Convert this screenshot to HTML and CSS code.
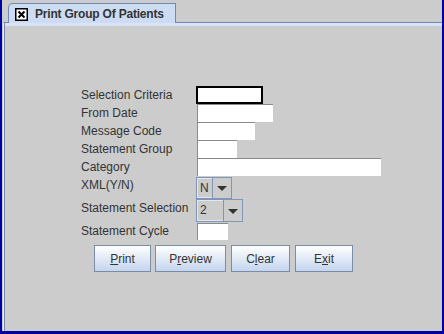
FILE: index.html
```html
<!DOCTYPE html>
<html lang="en">
<head>
    <meta charset="UTF-8">
    <title>Print Group Of Patients</title>
    <link rel="stylesheet" href="styles.css">
</head>
<body>
    <div class="window">
        <div class="tab-row">
            <div class="tab">
                <svg class="tab-close" width="13" height="13" viewBox="0 0 13 13">
                    <rect x="0.75" y="0.75" width="11.5" height="11.5" fill="#ffffff" stroke="#000" stroke-width="1.5"/>
                    <path d="M3.5 3.5 L9.5 9.5 M9.5 3.5 L3.5 9.5" stroke="#000" stroke-width="2"/>
                </svg>
                <span class="tab-title">Print Group Of Patients</span>
            </div>
        </div>
        <div class="tab-body">
            <div class="tab-stripe"></div>
            <div class="panel">
                <div class="row">
                    <label class="field-label">Selection Criteria</label>
                    <div class="text-field focused w-selection"></div>
                </div>
                <div class="row">
                    <label class="field-label">From Date</label>
                    <div class="text-field w-date"></div>
                </div>
                <div class="row">
                    <label class="field-label">Message Code</label>
                    <div class="text-field w-message"></div>
                </div>
                <div class="row">
                    <label class="field-label">Statement Group</label>
                    <div class="text-field w-group"></div>
                </div>
                <div class="row">
                    <label class="field-label">Category</label>
                    <div class="text-field w-category"></div>
                </div>
                <div class="row row-combo">
                    <label class="field-label">XML(Y/N)</label>
                    <div class="combo combo-xml">
                        <span class="combo-value">N</span>
                        <span class="combo-arrow"></span>
                    </div>
                </div>
                <div class="row row-combo row-combo-tall">
                    <label class="field-label">Statement Selection</label>
                    <div class="combo combo-selection">
                        <span class="combo-value">2</span>
                        <span class="combo-arrow"></span>
                    </div>
                </div>
                <div class="row">
                    <label class="field-label">Statement Cycle</label>
                    <div class="text-field w-cycle"></div>
                </div>
                <div class="buttons">
                    <button class="btn btn-print"><u>P</u>rint</button>
                    <button class="btn btn-preview">P<u>r</u>eview</button>
                    <button class="btn btn-clear">C<u>l</u>ear</button>
                    <button class="btn btn-exit">E<u>x</u>it</button>
                </div>
            </div>
        </div>
    </div>
</body>
</html>
```

FILE: styles.css
```css
:root {
    --frame-blue: #0000a0;
    --steel: #7088b4;
    --tab-fill: #cddcf3;
    --stripe: #d8e3f5;
    --panel: #cccccc;
    --text: #333333;
    --field-edge: #8a8a8a;
}

* {
    box-sizing: border-box;
    margin: 0;
    padding: 0;
}

body {
    font-family: "Liberation Sans", Arial, sans-serif;
    font-size: 12px;
    color: var(--text);
    width: 444px;
    height: 334px;
    overflow: hidden;
}

.window {
    width: 444px;
    height: 334px;
    display: flex;
    flex-direction: column;
    background: var(--panel);
    border-left: 2px solid var(--frame-blue);
    border-right: 2px solid var(--frame-blue);
    border-bottom: 3px solid var(--frame-blue);
}

/* tab strip */
.tab-row {
    height: 22px;
    padding: 3px 0 0 6px;
    display: flex;
    align-items: flex-start;
}

.tab {
    width: 168px;
    height: 20px;
    display: flex;
    align-items: center;
    padding-left: 6px;
    background: var(--tab-fill);
    border: 1px solid var(--steel);
    border-bottom: none;
    border-top-left-radius: 5px;
    position: relative;
    z-index: 2;
}

.tab-close {
    flex: none;
    margin-top: 2px;
}

.tab-title {
    margin-left: 7px;
    font-weight: bold;
    font-size: 12px;
    letter-spacing: -0.2px;
    color: var(--text);
    white-space: nowrap;
}

.tab-body {
    flex: 1;
    display: flex;
    flex-direction: column;
    margin-left: 1px;
    border-top: 1px solid var(--steel);
    border-left: 1px solid #e4ebf7;
}

.tab-stripe {
    height: 3px;
    background: var(--stripe);
    border-left: 1px solid var(--steel);
}

.panel {
    flex: 1;
    border-left: 1px solid var(--steel);
    padding: 60px 0 0 76px;
}

/* form rows */
.row {
    display: flex;
    align-items: flex-start;
    height: 18px;
}

.row-combo {
    height: 23px;
}

.row-combo-tall {
    height: 23px;
}

.field-label {
    width: 115px;
    line-height: 18px;
    white-space: nowrap;
}

.text-field {
    height: 18px;
    margin-left: 1px;
    background: #ffffff;
    border-top: 1px solid var(--field-edge);
    border-left: 1px solid var(--field-edge);
}

.text-field.focused {
    margin-left: 0;
    border: 2px solid #000000;
}

.w-selection { width: 67px; }
.w-date { width: 76px; }
.w-message { width: 58px; }
.w-group { width: 40px; }
.w-category { width: 184px; }
.w-cycle { width: 31px; height: 17px; margin-top: 1px; }

.combo {
    display: flex;
    height: 23px;
    border: 1px solid #8096b6;
    background: var(--panel);
}

.combo-xml {
    width: 36px;
    margin-top: 1px;
    height: 22px;
}

.combo-selection {
    width: 47px;
}

.combo-value {
    flex: 1;
    line-height: 19px;
    padding-left: 2px;
    border: 1px solid #dfe7f4;
    border-right: none;
}

.combo-arrow {
    width: 19px;
    border-left: 1px solid #8096b6;
    display: flex;
    align-items: center;
    justify-content: center;
}

.combo-arrow::after {
    content: "";
    border-left: 5px solid transparent;
    border-right: 5px solid transparent;
    border-top: 5px solid #333333;
    margin-top: 1px;
}

/* buttons */
.buttons {
    display: flex;
    margin: 5px 0 0 13px;
}

.btn {
    height: 27px;
    margin-right: 5px;
    font-family: "Liberation Sans", Arial, sans-serif;
    font-size: 12px;
    color: var(--text);
    background: linear-gradient(to bottom, #ffffff, #c4d5ee);
    border: 1px solid #7b8ca6;
    border-radius: 0;
}

.btn u {
    text-decoration: underline;
}

.btn-print { width: 57px; margin-right: 4px; }
.btn-preview { width: 71px; }
.btn-clear { width: 59px; }
.btn-exit { width: 58px; }
```
